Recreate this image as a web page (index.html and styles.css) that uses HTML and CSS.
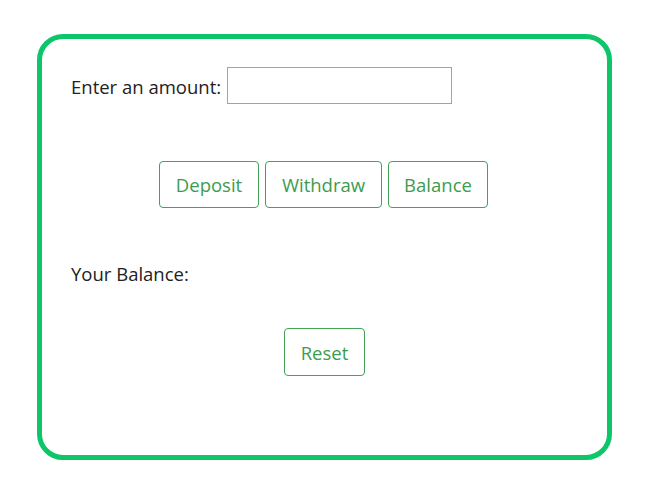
FILE: index.html
```html
<!DOCTYPE html>
<html>
<head>
<meta charset="utf-8">
<link rel="stylesheet" href="styles.css">
</head>
<body>
<div class="card">
  <div class="amount-row">
    <label class="label" for="amt">Enter an amount:</label>
    <input id="amt" class="amount-input" type="text">
  </div>
  <div class="actions">
    <button class="btn btn-deposit">Deposit</button>
    <button class="btn btn-withdraw">Withdraw</button>
    <button class="btn btn-balance">Balance</button>
  </div>
  <div class="balance">Your Balance:</div>
  <div class="reset-row">
    <button class="btn btn-reset">Reset</button>
  </div>
</div>
</body>
</html>
```
FILE: styles.css
```css
html, body {
  margin: 0;
  padding: 0;
  background: #ffffff;
}
body {
  font-family: "Open Sans", "Noto Sans", sans-serif;
  color: #222;
}
.card {
  box-sizing: border-box;
  margin: 34px 0 0 37px;
  width: 575px;
  height: 426px;
  border: 5px solid #0dc66a;
  border-radius: 26px;
  padding: 28px 31px 0 29px;
}
.amount-row {
  display: flex;
  align-items: center;
  height: 37px;
}
.label {
  font-size: 18.5px;
  margin-right: 6px;
  margin-top: 4px;
  line-height: 1;
}
.amount-input {
  box-sizing: border-box;
  width: 225px;
  height: 37px;
  border: 1px solid #a3a3a3;
  margin: 0;
  padding: 0 4px;
  font-size: 16px;
  outline: none;
}
.actions {
  display: flex;
  justify-content: center;
  gap: 6px;
  margin-top: 57px;
}
.btn {
  box-sizing: border-box;
  height: 47px;
  background: #fff;
  border: 1px solid #44a257;
  border-radius: 4px;
  color: #3b9c4f;
  font-family: "Open Sans", "Noto Sans", sans-serif;
  font-size: 18.5px;
  padding: 0;
  cursor: pointer;
}
.btn-deposit { width: 100px; }
.btn-withdraw { width: 117px; }
.btn-balance { width: 100px; }
.btn-reset { width: 81px; height: 48px; margin-left: 2px; }
.balance {
  font-size: 18.5px;
  margin-top: 54px;
  line-height: 24px;
}
.reset-row {
  display: flex;
  justify-content: center;
  margin-top: 42px;
}
```
